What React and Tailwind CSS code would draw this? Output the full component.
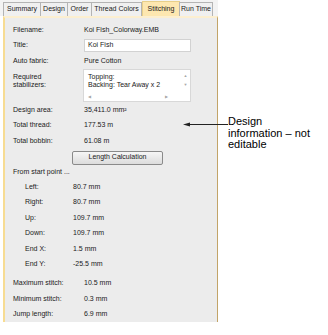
import React from "react";

const Row = ({ label, value, h = "h-[15.5px]", indent = false }) => (
  <div className={`flex items-center ${h}`}>
    <div className={indent ? "w-[68px] pl-[20px]" : "w-[79px] pl-[8px]"}>{label}</div>
    <div>{value}</div>
  </div>
);

export default function App() {
  const tabs = [
    ["Summary", "w-[38px]"],
    ["Design", "w-[28px]"],
    ["Order", "w-[25px]"],
    ["Thread Colors", "w-[51px]"],
    ["Stitching", "w-[38px]"],
    ["Run Time", "w-[34px]"],
  ];
  return (
    <div
      className="relative w-[328px] h-[335px] bg-white text-[#1a1a1a] overflow-hidden"
      style={{ fontFamily: '"Liberation Sans", Arial, sans-serif' }}
    >
      <div className="flex">
        <div className="w-[218px] flex flex-col">
          {/* Tabs */}
          <div className="h-[16px] flex items-end pl-[3px] bg-[#f3f3f3] text-[7px] whitespace-nowrap">
            {tabs.map(([t, w]) =>
              t === "Stitching" ? (
                <div
                  key={t}
                  className={`${w} h-[15px] flex items-center justify-center bg-[#fde7b0] border-x border-t border-[#e8cf8a]`}
                >
                  {t}
                </div>
              ) : (
                <div
                  key={t}
                  className={`${w} h-[14px] flex items-center justify-center bg-[#f0f0f0] border-x border-t border-[#b4b4b4] -ml-px first:ml-0`}
                >
                  {t}
                </div>
              )
            )}
          </div>
          {/* Panel */}
          <div className="h-[306px] ml-[3px] bg-[#ececec] border-l-2 border-t-2 border-r border-l-[#f7dc92] border-t-[#fcefd0] border-r-[#c2a468] text-[7px] pt-[5px]">
            <Row label="Filename:" value="Koi Fish_Colorway.EMB" h="h-[14px]" />
            <div className="flex items-center h-[17px]">
              <div className="w-[79px] pl-[8px]">Title:</div>
              <div className="w-[107px] h-[13px] bg-white border border-[#d2d2d2] flex items-center pl-[3px]">
                Koi Fish
              </div>
            </div>
            <Row label="Auto fabric:" value="Pure Cotton" h="h-[14px]" />
            <div className="flex mt-[1px]">
              <div className="w-[78px] pl-[8px] pt-[4px] leading-[8px]">
                Required
                <br />
                stabilizers:
              </div>
              <div className="w-[108px] h-[33px] bg-white border border-[#d8d8d8] flex flex-col">
                <div className="flex flex-1">
                  <div className="flex-1 pl-[4px] pt-[3px] leading-[8px]">
                    Topping:
                    <br />
                    Backing: Tear Away x 2
                  </div>
                  <div className="w-[9px] flex flex-col items-center justify-start pt-[3px] text-[4px] text-[#a8a8a8] gap-[3px]">
                    <span>▲</span>
                    <span>▼</span>
                  </div>
                </div>
                <div className="h-[9px] flex items-center justify-between pl-[4px] pr-[22px] text-[4px] text-[#a8a8a8]">
                  <span>◀</span>
                  <span>▶</span>
                </div>
              </div>
            </div>
            <Row label="Design area:" value={<span>35,411.0 mm²</span>} />
            <Row label="Total thread:" value="177.53 m" />
            <Row label="Total bobbin:" value="61.08 m" />
            <div className="pl-[67px] mt-[2px]">
              <div className="w-[91px] h-[14px] flex items-center justify-center rounded-[2px] border border-[#8a8a8a] bg-gradient-to-b from-[#f6f6f6] to-[#dcdcdc]">
                Length Calculation
              </div>
            </div>
            <div className="h-[15px] flex items-center pl-[8px]">From start point ...</div>
            <Row indent label="Left:" value="80.7 mm" h="h-[15.4px]" />
            <Row indent label="Right:" value="80.7 mm" h="h-[15.4px]" />
            <Row indent label="Up:" value="109.7 mm" h="h-[15.4px]" />
            <Row indent label="Down:" value="109.7 mm" h="h-[15.4px]" />
            <Row indent label="End X:" value="1.5 mm" h="h-[15.4px]" />
            <Row indent label="End Y:" value="-25.5 mm" h="h-[15.4px]" />
            <div className="h-[4px]" />
            <Row label="Maximum stitch:" value="10.5 mm" h="h-[15.4px]" />
            <Row label="Minimum stitch:" value="0.3 mm" h="h-[15.4px]" />
            <Row label="Jump length:" value="6.9 mm" h="h-[15.4px]" />
          </div>
        </div>
        {/* Annotation */}
        <div className="pl-[10px] pt-[116px] text-[11px] leading-[11.5px] text-black">
          Design
          <br />
          information – not
          <br />
          editable
        </div>
      </div>
      <svg className="absolute left-[182px] top-[120px]" width="48" height="9" viewBox="0 0 48 9">
        <line x1="3" y1="4.5" x2="46" y2="4.5" stroke="#222" strokeWidth="1" />
        <path d="M1 4.5 L8 2.5 L8 6.5 Z" fill="#222" />
      </svg>
    </div>
  );
}
